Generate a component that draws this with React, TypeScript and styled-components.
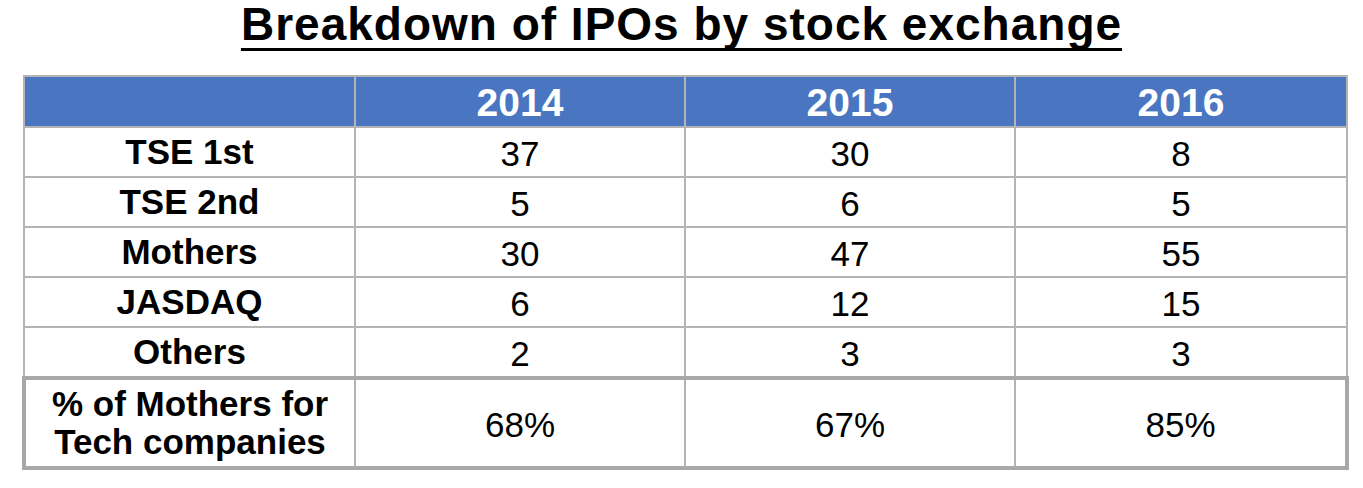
import React from 'react';
import styled, { createGlobalStyle } from 'styled-components';

const GlobalStyle = createGlobalStyle`
  html, body {
    margin: 0;
    padding: 0;
    background: #ffffff;
    font-family: "Liberation Sans", Arial, sans-serif;
  }
`;

type Row = { label: string; values: string[] };

const years = ['2014', '2015', '2016'];

const rows: Row[] = [
    { label: 'TSE 1st', values: ['37', '30', '8'] },
    { label: 'TSE 2nd', values: ['5', '6', '5'] },
    { label: 'Mothers', values: ['30', '47', '55'] },
    { label: 'JASDAQ', values: ['6', '12', '15'] },
    { label: 'Others', values: ['2', '3', '3'] },
];

export default function App() {
    return (
        <>
            <GlobalStyle />
            <Page>
                <TitleRow>
                    <Title>Breakdown of IPOs by stock exchange</Title>
                </TitleRow>
                <Table>
                    <colgroup>
                        <col style={{ width: 331 }} />
                        <col style={{ width: 330 }} />
                        <col style={{ width: 330 }} />
                        <col style={{ width: 332 }} />
                    </colgroup>
                    <thead>
                        <tr>
                            <HeadCell />
                            {years.map((y) => (
                                <HeadCell key={y}>{y}</HeadCell>
                            ))}
                        </tr>
                    </thead>
                    <tbody>
                        {rows.map((r) => (
                            <tr key={r.label}>
                                <LabelCell>{r.label}</LabelCell>
                                {r.values.map((v, i) => (
                                    <ValueCell key={i}>{v}</ValueCell>
                                ))}
                            </tr>
                        ))}
                        <TotalRow>
                            <LabelCell $multi>
                                % of Mothers for
                                <br />
                                Tech companies
                            </LabelCell>
                            <ValueCell>68%</ValueCell>
                            <ValueCell>67%</ValueCell>
                            <ValueCell>85%</ValueCell>
                        </TotalRow>
                    </tbody>
                </Table>
            </Page>
        </>
    );
}

const Page = styled.div`
  width: 1363px;
  height: 488px;
  padding: 0 18px 0 22px;
  box-sizing: border-box;
`;

const TitleRow = styled.div`
  display: flex;
  justify-content: center;
  margin: 0 -18px 0 -22px;
  height: 75px;
`;

const Title = styled.h1`
  margin: 0;
  font-size: 46px;
  line-height: 48px;
  height: 52px;
  font-weight: 700;
  letter-spacing: 1px;
  color: #000;
  text-decoration: underline;
  text-decoration-thickness: 3px;
  text-underline-offset: 8px;
  text-decoration-skip-ink: none;
`;

const Table = styled.table`
  width: 1323px;
  border-collapse: collapse;
  table-layout: fixed;
  color: #000;
`;

const HeadCell = styled.th`
  height: 47px;
  padding: 2px 0 0;
  background: #4a76c1;
  color: #ffffff;
  font-weight: 700;
  font-size: 39px;
  line-height: 40px;
  text-align: center;
  border: 2px solid #b4b4b4;
`;

const LabelCell = styled.td<{ $multi?: boolean }>`
  height: ${(p) => (p.$multi ? '86px' : '48px')};
  padding: 0;
  font-size: 35px;
  font-weight: 700;
  text-align: center;
  line-height: ${(p) => (p.$multi ? '38px' : '36px')};
  border: 2px solid #b4b4b4;
`;

const ValueCell = styled.td`
  padding: 4px 0 0;
  font-size: 35px;
  text-align: center;
  line-height: 36px;
  border: 2px solid #b4b4b4;
`;

const TotalRow = styled.tr`
  & > td {
    border-top: 4px solid #a8a8a8;
    border-bottom: 4px solid #a8a8a8;
  }
  & > td:first-child {
    border-left: 4px solid #a8a8a8;
  }
  & > td:last-child {
    border-right: 4px solid #a8a8a8;
  }
`;
